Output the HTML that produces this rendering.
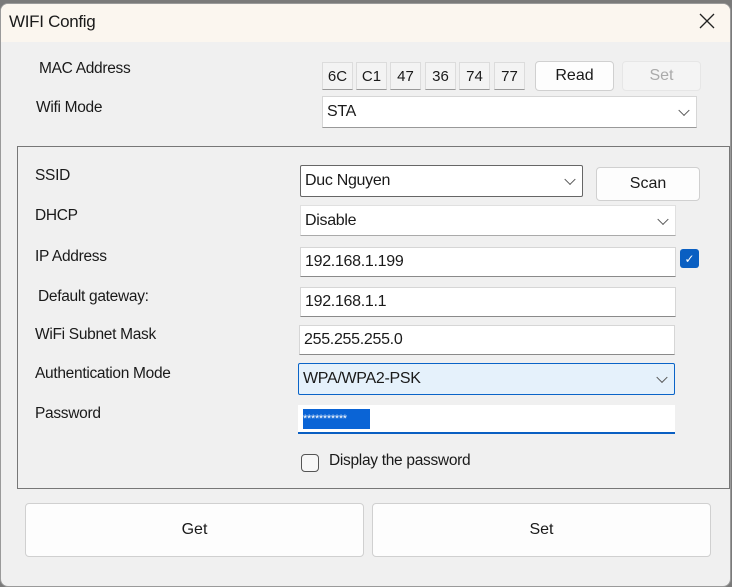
<!DOCTYPE html>
<html><head><style>
*{box-sizing:border-box;margin:0;padding:0}
body{width:732px;height:587px;background:#7a7a7a;font-family:"Liberation Sans",sans-serif;font-size:15px;color:#1a1a1a;position:relative;overflow:hidden}
.win{position:absolute;left:0;top:3px;width:731px;height:584px;background:#f0f0f0;border:1px solid #9a9a9a;border-radius:8px;overflow:hidden}
.title{position:absolute;left:0;top:0;width:100%;height:38px;background:#fbf6ef}
.a{position:absolute}
.lbl{position:absolute;font-size:15.5px;letter-spacing:-0.3px}
.box{position:absolute;background:#fff;border:1px solid #d6d6d6;border-bottom:1px solid #8a8a8a;padding-left:4px;display:flex;align-items:center;font-size:16px;letter-spacing:-0.3px}
.mac{position:absolute;top:58px;width:31px;height:28px;background:#f3f3f3;border:1px solid #dcdcdc;border-bottom:1px solid #999;font-size:15px;display:flex;align-items:center;justify-content:center}
.btn{position:absolute;background:#fdfdfd;border:1px solid #d0d0d0;border-radius:4px;display:flex;align-items:center;justify-content:center;font-size:16px}
.chev{position:absolute;right:8px;top:50%;width:8px;height:8px;border-right:1.3px solid #555;border-bottom:1.3px solid #555;transform:translateY(-70%) rotate(45deg)}
</style></head><body>
<div class="win">
<div class="title"></div>
<div class="lbl" style="left:8px;top:8px;font-size:17px">WIFI Config</div>
<svg class="a" style="left:698px;top:9px" width="16" height="16" viewBox="0 0 16 16"><path d="M1 1L15 15M15 1L1 15" stroke="#222" stroke-width="1.3"/></svg>

<div class="lbl" style="left:38px;top:56px">MAC Address</div>
<div class="lbl" style="left:35px;top:95px">Wifi Mode</div>
<div class="mac" style="left:321px">6C</div>
<div class="mac" style="left:355px">C1</div>
<div class="mac" style="left:389px">47</div>
<div class="mac" style="left:424px">36</div>
<div class="mac" style="left:458px">74</div>
<div class="mac" style="left:493px">77</div>
<div class="btn" style="left:534px;top:57px;width:79px;height:30px">Read</div>
<div class="btn" style="left:621px;top:57px;width:79px;height:30px;background:#f4f4f4;color:#aaa;border-color:#e6e6e6">Set</div>
<div class="box" style="left:321px;top:92px;width:375px;height:32px;border-color:#d6d6d6;border-bottom-color:#999">STA<span class="chev"></span></div>

<div class="a" style="left:16px;top:142px;width:713px;height:343px;border:1px solid #777"></div>

<div class="lbl" style="left:34px;top:163px">SSID</div>
<div class="lbl" style="left:34px;top:203px">DHCP</div>
<div class="lbl" style="left:34px;top:244px">IP Address</div>
<div class="lbl" style="left:37px;top:284px">Default gateway:</div>
<div class="lbl" style="left:34px;top:322px">WiFi Subnet Mask</div>
<div class="lbl" style="left:34px;top:361px">Authentication Mode</div>
<div class="lbl" style="left:34px;top:401px">Password</div>

<div class="box" style="left:299px;top:161px;width:283px;height:32px;border:1px solid #666;border-radius:2px">Duc Nguyen<span class="chev"></span></div>
<div class="btn" style="left:595px;top:163px;width:104px;height:34px">Scan</div>
<div class="box" style="left:299px;top:201px;width:376px;height:31px;border-color:#e0e0e0;border-bottom-color:#aaa">Disable<span class="chev"></span></div>
<div class="box" style="left:299px;top:243px;width:376px;height:30px">192.168.1.199</div>
<div class="a" style="left:679px;top:245px;width:19px;height:19px;background:#0a5fc2;border-radius:3px;color:#fff;font-size:12px;display:flex;align-items:center;justify-content:center">✓</div>
<div class="box" style="left:299px;top:283px;width:376px;height:30px">192.168.1.1</div>
<div class="box" style="left:298px;top:321px;width:376px;height:30px">255.255.255.0</div>
<div class="box" style="left:297px;top:359px;width:377px;height:32px;background:#e5f1fb;border:1px solid #0a64c8;border-radius:2px">WPA/WPA2-PSK<span class="chev"></span></div>
<div class="box" style="left:297px;top:401px;width:377px;height:29px;border:none;border-bottom:2px solid #0a5fc2;padding-left:5px"><span style="background:#0a64d6;color:#fff;font-size:11px;height:20px;width:67px;display:inline-block;line-height:20px;overflow:hidden">***********</span></div>
<div class="a" style="left:300px;top:450px;width:18px;height:18px;border:1.3px solid #555;border-radius:4px;background:#f7f7f7"></div>
<div class="lbl" style="left:328px;top:448px">Display the password</div>

<div class="btn" style="left:24px;top:499px;width:339px;height:54px">Get</div>
<div class="btn" style="left:371px;top:499px;width:339px;height:54px">Set</div>
</div>
</body></html>
